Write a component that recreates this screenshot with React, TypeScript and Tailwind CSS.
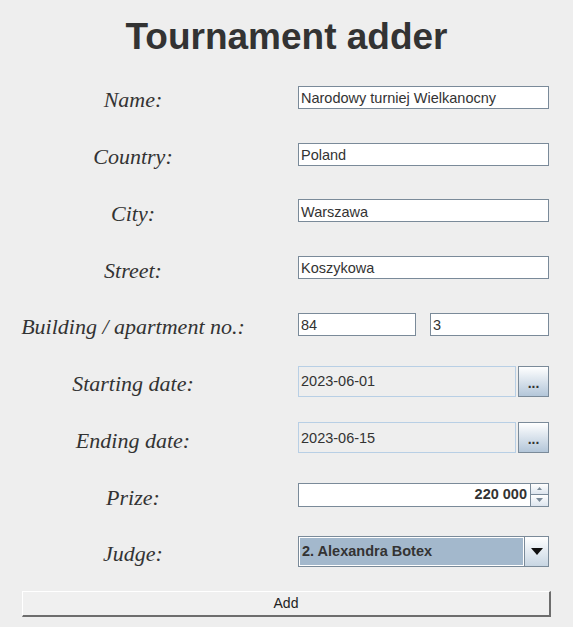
const labelFont = { fontFamily: '"Liberation Serif", "Times New Roman", serif' }

const Label = ({ text }: { text: string }) => (
  <div className="w-[266px] flex justify-center pt-[5px] italic text-[22px] text-[#333333] whitespace-nowrap" style={labelFont}>
    {text}
  </div>
)

const TextField = ({ value, className = "w-[251px]" }: { value: string; className?: string }) => (
  <div className={`${className} h-[23px] bg-white border border-[#7a8a99] flex items-center px-[2px] pt-[2px] text-[14.5px] text-[#333333] leading-none`}>
    {value}
  </div>
)

const DateField = ({ value }: { value: string }) => (
  <div className="flex gap-[2px] w-[251px]">
    <div className="w-[218px] h-[31px] bg-[#eeeeee] border border-[#b8cfe5] flex items-center px-[2px] pt-[2px] text-[14.5px] text-[#333333]">
      {value}
    </div>
    <div className="w-[31px] h-[31px] border border-[#7a8a99] bg-gradient-to-b from-white to-[#b3c6d9] flex items-center justify-center font-bold text-[14px] text-[#333333] pt-[4px]">
      ...
    </div>
  </div>
)

const Row = ({ label, children }: { label: string; children: React.ReactNode }) => (
  <div className="h-[56.75px] flex items-center">
    <Label text={label} />
    <div className="ml-[32px]">{children}</div>
  </div>
)

export default function App() {
  return (
    <div className="w-[573px] h-[627px] bg-[#eeeeee] overflow-hidden" style={{ fontFamily: '"Liberation Sans", Arial, sans-serif' }}>
      <h1 className="mt-[16px] mb-[11px] h-[42px] leading-[42px] text-center text-[37px] font-bold text-[#333333]">
        Tournament adder
      </h1>
      <Row label="Name:">
        <TextField value="Narodowy turniej Wielkanocny" />
      </Row>
      <Row label="Country:">
        <TextField value="Poland" />
      </Row>
      <Row label="City:">
        <TextField value="Warszawa" />
      </Row>
      <Row label="Street:">
        <TextField value="Koszykowa" />
      </Row>
      <Row label="Building / apartment no.:">
        <div className="flex gap-[14px]">
          <TextField value="84" className="w-[118px]" />
          <TextField value="3" className="w-[119px]" />
        </div>
      </Row>
      <Row label="Starting date:">
        <DateField value="2023-06-01" />
      </Row>
      <Row label="Ending date:">
        <DateField value="2023-06-15" />
      </Row>
      <Row label="Prize:">
        <div className="flex w-[251px] h-[24px]">
          <div className="w-[232px] h-full bg-white border border-[#7a8a99] border-r-0 flex items-center justify-end pr-[3px] pt-[1px] font-bold text-[14.5px] text-[#333333]">
            220 000
          </div>
          <div className="w-[19px] h-full flex flex-col">
            <div className="h-[12px] border border-[#7a8a99] bg-gradient-to-b from-white to-[#dde5ee] flex items-center justify-center">
              <svg width="5" height="3" viewBox="0 0 5 3"><path d="M2.5 0 L5 3 L0 3 Z" fill="#7a8a99" /></svg>
            </div>
            <div className="h-[12px] border border-t-0 border-[#7a8a99] bg-gradient-to-b from-white to-[#dde5ee] flex items-center justify-center">
              <svg width="7" height="4" viewBox="0 0 7 4"><path d="M0 0 L7 0 L3.5 4 Z" fill="#7a8a99" /></svg>
            </div>
          </div>
        </div>
      </Row>
      <Row label="Judge:">
        <div className="flex w-[251px] h-[31px] border border-[#7a8a99]">
          <div className="flex-1 border border-white bg-[#a3b8cc] flex items-center px-[2px] pt-[1px] font-bold text-[14.5px] text-[#333333]">
            2. Alexandra Botex
          </div>
          <div className="w-[24px] h-full border-l border-[#7a8a99] bg-gradient-to-b from-white to-[#c8d6e3] flex items-center justify-center">
            <svg width="12" height="7" viewBox="0 0 12 7"><path d="M0 0 L12 0 L6 7 Z" fill="#111111" /></svg>
          </div>
        </div>
      </Row>
      <div className="px-[22px] mt-[11px]">
        <div className="h-[26px] bg-[#f0f0f0] border-t border-l border-white border-b-2 border-r-2 border-b-[#6d6d6d] border-r-[#6d6d6d] flex items-center justify-center pt-[1px] text-[14px] text-[#222222]">
          Add
        </div>
      </div>
    </div>
  )
}
